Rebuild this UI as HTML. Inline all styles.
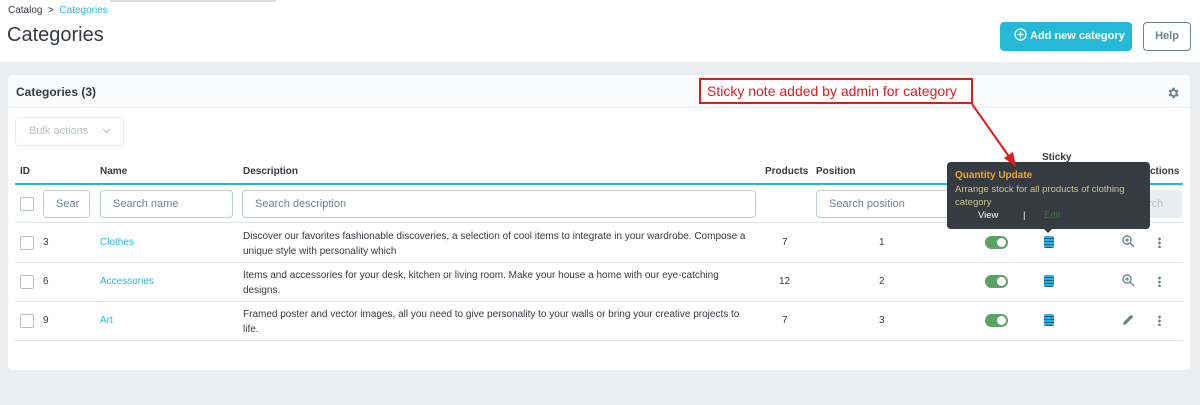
<!DOCTYPE html>
<html><head><meta charset="utf-8"><style>
*{box-sizing:border-box;margin:0;padding:0}
body{width:1200px;height:405px;overflow:hidden;background:#ebedef;font-family:"Liberation Sans",sans-serif;color:#363a41;position:relative}
.a{position:absolute}
.hdr{left:0;top:0;width:1200px;height:62px;background:#fff}
.card{left:8px;top:75px;width:1182px;height:295px;background:#fff;border-radius:4px}
.ch{left:8px;top:75px;width:1182px;height:33px;background:#fafbfc;border-bottom:1px solid #e8ecee;border-radius:4px 4px 0 0}
.inp{border:1px solid #bbcdd2;border-radius:4px;background:#fff;font-size:11px;color:#6c868e;padding-left:12px;line-height:26px;height:28px}
.th{font-size:10px;font-weight:bold;top:166px}
.cb{width:14px;height:14px;border:1px solid #b7c2c6;border-radius:2px;background:#fff}
.t{font-size:10px}
.link{color:#25b9d7;font-size:10px}
.row{left:15px;width:1168px;height:1px;background:#dfe4e6}
.tog{width:23px;height:13px;border-radius:7px;background:#5aa266}
.tog:after{content:"";position:absolute;right:2px;top:2px;width:9px;height:9px;border-radius:50%;background:#fff}
.note{width:10px;height:12px;border-radius:2px;background-image:repeating-linear-gradient(#2cb0e3 0 2px,#1c5f85 2px 3px)}
.dots{width:3px;height:11px;background:radial-gradient(circle,#6c868e 1.3px,transparent 1.5px) 0 0/3px 4px repeat-y}
</style></head><body>
<div class="a hdr"></div>
<div class="a" style="left:110px;top:0;width:166px;height:2px;background:#ddd"></div>
<div class="a t" style="left:8px;top:5px;font-size:10px;color:#363a41">Catalog &nbsp;&gt;&nbsp; <span style="color:#25b9d7">Categories</span></div>
<div class="a" style="left:7px;top:24px;font-size:20px;color:#363a41">Categories</div>
<div class="a" style="left:1000px;top:22px;width:132px;height:29px;background:#25b9d7;border-radius:4px;color:#fff;font-size:11px;font-weight:bold;line-height:29px;padding-left:14px"><svg width="13" height="13" viewBox="0 0 13 13" style="vertical-align:-2px;margin-right:3px"><circle cx="6.5" cy="6.5" r="5.5" fill="none" stroke="#fff" stroke-width="1.3"/><path d="M6.5 3.5v6M3.5 6.5h6" stroke="#fff" stroke-width="1.3"/></svg>Add new category</div>
<div class="a" style="left:1143px;top:22px;width:48px;height:29px;border:1px solid #6c868e;border-radius:4px;color:#6c868e;font-size:11px;font-weight:bold;line-height:27px;text-align:center">Help</div>

<div class="a card"></div>
<div class="a ch"></div>
<div class="a" style="left:16px;top:85px;font-size:12px;font-weight:bold">Categories (3)</div>
<svg class="a" style="left:1166px;top:86px" width="14" height="14" viewBox="0 0 24 24"><path fill="#6c868e" d="M19.4 13a7.5 7.5 0 0 0 0-2l2.1-1.6-2-3.5-2.5 1a7 7 0 0 0-1.7-1L15 3h-4l-.4 2.7a7 7 0 0 0-1.7 1l-2.5-1-2 3.5L6.6 11a7.5 7.5 0 0 0 0 2l-2.1 1.6 2 3.5 2.5-1a7 7 0 0 0 1.7 1L11 21h4l.4-2.7a7 7 0 0 0 1.7-1l2.5 1 2-3.5zM13 15.5a3.5 3.5 0 1 1 0-7 3.5 3.5 0 0 1 0 7z"/></svg>

<div class="a" style="left:15px;top:117px;width:109px;height:29px;border:1px solid #e8ecee;border-radius:4px;color:#b5c0c4;font-size:11px;line-height:27px;padding-left:13px">Bulk actions</div>
<svg class="a" style="left:102px;top:128px" width="9" height="6"><path d="M1 1l3.5 3.5L8 1" fill="none" stroke="#b5c0c4" stroke-width="1.2"/></svg>

<div class="a th" style="left:20px">ID</div>
<div class="a th" style="left:100px">Name</div>
<div class="a th" style="left:243px">Description</div>
<div class="a th" style="left:765px">Products</div>
<div class="a th" style="left:816px">Position</div>
<div class="a th" style="left:1042px;top:152px">Sticky</div>
<div class="a th" style="left:1150px">ctions</div>
<div class="a" style="left:15px;top:183px;width:1168px;height:2px;background:#25b9d7"></div>

<div class="a cb" style="left:20px;top:197px"></div>
<div class="a inp" style="left:43px;top:190px;width:47px">Sear</div>
<div class="a inp" style="left:100px;top:190px;width:133px">Search name</div>
<div class="a inp" style="left:242px;top:190px;width:514px">Search description</div>
<div class="a inp" style="left:816px;top:190px;width:136px">Search position</div>
<div class="a" style="left:1136px;top:190px;width:46px;height:28px;background:#eaedef;border-radius:4px;color:#b5c0c4;font-size:11px;line-height:28px;padding-left:12px">rch</div>
<div class="a" style="left:15px;top:222px;width:1168px;height:1px;background:#dfe4e6"></div>

<div class="a cb" style="left:20px;top:236px"></div><div class="a t" style="left:43px;top:237px">3</div><div class="a link" style="left:100px;top:237px">Clothes</div>
<div class="a t" style="left:243px;top:229px;line-height:15px;width:505px">Discover our favorites fashionable discoveries, a selection of cool items to integrate in your wardrobe. Compose a unique style with personality which</div>
<div class="a t" style="left:782px;top:237px">7</div><div class="a t" style="left:879px;top:237px">1</div>
<div class="a tog" style="left:985px;top:236px"></div><div class="a note" style="left:1044px;top:236px"></div>
<svg class="a" style="left:1122px;top:235px" width="13" height="13" viewBox="0 0 13 13"><circle cx="5" cy="5" r="4" fill="none" stroke="#6c868e" stroke-width="1.4"/><path d="M8 8l4 4M3.3 5h3.4M5 3.3v3.4" stroke="#6c868e" stroke-width="1.4"/></svg>
<div class="a dots" style="left:1158px;top:237px"></div>
<div class="a row" style="top:262px"></div>

<div class="a cb" style="left:20px;top:275px"></div><div class="a t" style="left:43px;top:276px">6</div><div class="a link" style="left:100px;top:276px">Accessories</div>
<div class="a t" style="left:243px;top:268px;line-height:15px;width:505px">Items and accessories for your desk, kitchen or living room. Make your house a home with our eye-catching designs.</div>
<div class="a t" style="left:779px;top:276px">12</div><div class="a t" style="left:879px;top:276px">2</div>
<div class="a tog" style="left:985px;top:275px"></div><div class="a note" style="left:1044px;top:275px"></div>
<svg class="a" style="left:1122px;top:274px" width="13" height="13" viewBox="0 0 13 13"><circle cx="5" cy="5" r="4" fill="none" stroke="#6c868e" stroke-width="1.4"/><path d="M8 8l4 4M3.3 5h3.4M5 3.3v3.4" stroke="#6c868e" stroke-width="1.4"/></svg>
<div class="a dots" style="left:1158px;top:276px"></div>
<div class="a row" style="top:301px"></div>

<div class="a cb" style="left:20px;top:314px"></div><div class="a t" style="left:43px;top:315px">9</div><div class="a link" style="left:100px;top:315px">Art</div>
<div class="a t" style="left:243px;top:307px;line-height:15px;width:505px">Framed poster and vector images, all you need to give personality to your walls or bring your creative projects to life.</div>
<div class="a t" style="left:782px;top:315px">7</div><div class="a t" style="left:879px;top:315px">3</div>
<div class="a tog" style="left:985px;top:314px"></div><div class="a note" style="left:1044px;top:314px"></div>
<svg class="a" style="left:1122px;top:313px" width="13" height="13" viewBox="0 0 13 13"><path d="M1 12l.7-3L9 1.7l2.3 2.3L4 11.3z" fill="#6c868e"/></svg>
<div class="a dots" style="left:1158px;top:315px"></div>
<div class="a row" style="top:340px"></div>

<div class="a" style="left:947px;top:162px;width:203px;height:67px;background:#363a41;border-radius:4px"></div>
<div class="a" style="left:1043px;top:228px;width:0;height:0;border-left:5px solid transparent;border-right:5px solid transparent;border-top:5px solid #363a41"></div>
<div class="a" style="left:955px;top:170px;font-size:10px;font-weight:bold;color:#f5a623">Quantity Update</div>
<div class="a" style="left:955px;top:183px;font-size:9.5px;color:#c9c78a;line-height:13px;width:190px">Arrange stock for all products of clothing category</div>
<div class="a" style="left:978px;top:210px;font-size:9.5px;color:#fff">View</div>
<div class="a" style="left:1023px;top:210px;font-size:9.5px;color:#fff">|</div>
<div class="a" style="left:1044px;top:210px;font-size:9.5px;color:#2e7d32">Edit</div>

<div class="a" style="left:699px;top:78px;width:274px;height:26px;border:2px solid #e01b1b;background:#fff;color:#e01b1b;font-size:14px;line-height:22px;padding-left:6px">Sticky note added by admin for category</div>
<svg class="a" style="left:960px;top:100px" width="70" height="75"><line x1="12" y1="4" x2="50" y2="58" stroke="#e01b1b" stroke-width="2"/><polygon points="56,67 44,58 53,52" fill="#e01b1b"/></svg>
</body></html>
